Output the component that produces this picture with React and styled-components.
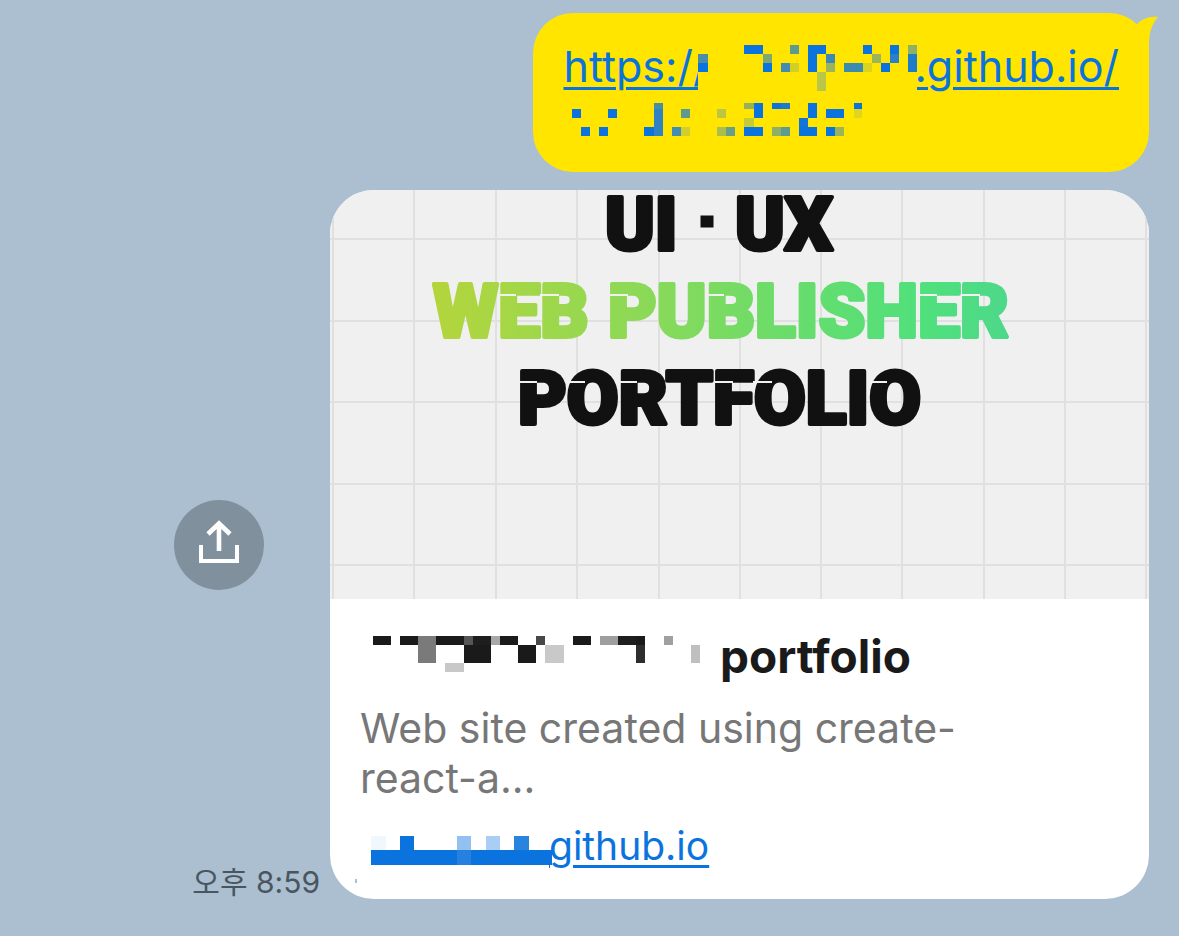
import React from "react";
import styled, { createGlobalStyle } from "styled-components";

const BLUE = "#0b73de";
const INK = "#1a1a1a";
const YELLOW = "#ffe500";

const GlobalStyle = createGlobalStyle`
  * { box-sizing: border-box; }
  body {
    margin: 0;
    background: #abbfd0;
    font-family: Inter, "Noto Sans CJK KR", sans-serif;
  }
`;

const Chat = styled.main`
  display: flex;
  flex-direction: column;
  align-items: flex-end;
  gap: 18px;
  min-height: 100vh;
  padding: 13px 30px 37px;
`;

const Bubble = styled.div`
  position: relative;
  padding: 26px 30px 35px;
  border-radius: 40px;
  background: ${YELLOW};
`;

const Tail = styled.svg`
  position: absolute;
  top: 3px;
  right: -9px;
  width: 30px;
  height: 44px;
`;

const MessageLink = styled.a`
  display: flex;
  flex-direction: column;
  gap: 10px;
  color: ${BLUE};
  font-size: 43px;
  line-height: 54px;
  text-decoration: none;
`;

const LinkLine = styled.span`
  display: flex;
  align-items: flex-start;
`;

const LinkText = styled.span`
  width: ${(p) => p.$width || "auto"};
  margin-left: ${(p) => (p.$tucked ? "-3px" : 0)};
  overflow: ${(p) => (p.$width ? "hidden" : "visible")};
  white-space: nowrap;
  text-decoration: underline;
  text-decoration-thickness: 3px;
  text-underline-offset: 5px;
`;

const MosaicArt = styled.svg`
  position: relative;
  display: block;
  flex: none;
  margin-top: ${(p) => p.$top || 0}px;
  margin-left: ${(p) => p.$left || 0}px;
  background: ${(p) => p.$ground || "transparent"};
`;

const PreviewRow = styled.div`
  display: flex;
  justify-content: flex-end;
  gap: 10px;
  width: 100%;
`;

const Meta = styled.div`
  display: grid;
  grid-template-rows: 1fr auto 1fr;
  flex: none;
  width: 146px;
`;

const ShareButton = styled.button`
  grid-row: 2;
  display: flex;
  align-items: center;
  justify-content: center;
  width: 90px;
  height: 90px;
  padding: 0 0 6px;
  border: 0;
  border-radius: 50%;
  background: #80909d;
  cursor: pointer;
`;

const Time = styled.time`
  grid-row: 3;
  align-self: end;
  justify-self: end;
  color: #4a565f;
  font-size: 30px;
  line-height: 34px;
  white-space: nowrap;
`;

const Card = styled.article`
  position: relative;
  flex: 0 1 819px;
  min-width: 0;
  overflow: hidden;
  border-radius: 44px;
  background: #fff;

  &::after {
    content: "";
    position: absolute;
    bottom: 16px;
    left: 25px;
    width: 2px;
    height: 4px;
    background: #abbfd0;
  }
`;

const Cover = styled.svg`
  display: block;
  width: 100%;
  height: auto;
`;

const CoverWord = styled.text`
  font-family: Roboto, sans-serif;
  font-size: 75px;
  font-weight: 900;
  stroke-width: 4px;
  stroke-linejoin: round;
`;

const Body = styled.div`
  display: flex;
  flex-direction: column;
  gap: 20px;
  padding: 30px;
`;

const Title = styled.h2`
  display: flex;
  align-items: flex-start;
  gap: 20px;
  margin: 0;
  color: ${INK};
  font-size: 46px;
  font-weight: 700;
  line-height: 54px;
`;

const Description = styled.p`
  max-width: 640px;
  margin: 0;
  color: #777;
  font-size: 41px;
  line-height: 50px;
`;

const HostLink = styled.a`
  display: flex;
  align-items: flex-start;
  color: ${BLUE};
  font-size: 39px;
  line-height: 46px;
  text-decoration: none;
`;

/* Cells are [x, y, width, height, colour]. */
const REPO_HOST = [
  [0, 9, 10, 9, "#4b8da8"], [0, 18, 10, 9, BLUE], [46, 0, 19, 9, BLUE],
  [65, 9, 9, 9, "#7fa76f"], [65, 18, 9, 9, BLUE], [83, 18, 9, 9, "#438caf"],
  [92, 18, 9, 9, "#d3cf28"], [92, 0, 9, 9, "#5d9a90"], [110, 0, 9, 27, BLUE],
  [119, 0, 9, 9, BLUE], [128, 9, 9, 9, "#3d88b5"], [128, 18, 9, 9, "#98b45c"],
  [119, 27, 9, 19, "#bac646"], [146, 18, 19, 9, "#3a8bb0"], [165, 18, 9, 9, "#dbd41f"],
  [165, 0, 9, 9, BLUE], [174, 9, 9, 9, "#9bb558"], [183, 18, 9, 9, BLUE],
  [192, 0, 9, 9, BLUE], [192, 9, 9, 9, "#2880c8"], [210, 0, 9, 9, "#8eb068"],
  [210, 9, 9, 18, "#1f7ccb"],
];

const REPO_PATH = [
  [9, 6, 9, 9, BLUE], [18, 24, 9, 9, BLUE], [36, 24, 9, 9, BLUE], [45, 6, 9, 9, BLUE],
  [81, 24, 10, 9, BLUE], [91, 0, 9, 6, "#4690a5"], [91, 6, 9, 27, "#2f83c0"],
  [109, 24, 9, 9, "#428db0"], [118, 24, 9, 9, "#d2cf2a"], [118, 6, 9, 9, "#5e9a91"],
  [154, 6, 9, 9, "#bbc740"], [154, 24, 9, 9, "#aabd4e"], [163, 24, 9, 9, "#68a086"],
  [181, 0, 10, 6, "#94b160"], [191, 0, 9, 15, BLUE], [181, 15, 10, 9, "#c5cb35"],
  [181, 24, 19, 9, BLUE], [209, 0, 9, 6, BLUE], [218, 0, 9, 6, "#1b7acd"],
  [209, 24, 9, 9, "#8cb06a"], [218, 24, 9, 9, "#609b90"], [236, 15, 9, 9, "#1273d8"],
  [236, 24, 18, 9, BLUE], [245, 0, 9, 15, BLUE], [263, 6, 18, 9, BLUE],
  [263, 24, 9, 9, BLUE], [272, 24, 9, 9, "#9ab45a"], [291, 0, 8, 6, BLUE],
  [291, 6, 8, 9, "#dfd71b"],
];

const OWNER_NAME = [
  [0, 0, 18, 9, INK], [27, 0, 18, 9, INK], [45, 0, 18, 27, "#7a7a7a"], [63, 0, 28, 9, INK],
  [91, 0, 9, 9, "#555"], [100, 0, 18, 9, "#1e1e1e"], [118, 0, 9, 9, "#a8a8a8"],
  [127, 0, 18, 9, INK], [163, 0, 9, 9, "#484848"], [200, 0, 18, 9, INK],
  [227, 0, 18, 9, "#9e9e9e"], [245, 0, 18, 9, "#1e1e1e"], [263, 0, 9, 9, INK],
  [291, 0, 9, 9, "#a0a0a0"], [91, 9, 27, 18, INK], [145, 9, 18, 18, INK],
  [172, 9, 19, 18, "#c9c9c9"], [263, 9, 9, 18, "#2e2e2e"], [318, 9, 9, 18, "#bfbfbf"],
  [72, 27, 19, 9, "#c8c8c8"],
];

const OWNER_HOST = [
  [0, 14, 181, 15, BLUE], [86, 14, 14, 15, "#2680e0"], [0, 0, 15, 14, "#f1f8fd"],
  [29, 0, 14, 14, BLUE], [86, 0, 14, 14, "#92c0f1"], [115, 0, 14, 14, "#a9cdf4"],
  [143, 0, 15, 14, "#2984de"],
];

function Mosaic({ cells, width, height, top, left, ground }) {
  return (
    <MosaicArt
      width={width}
      height={height}
      viewBox={`0 0 ${width} ${height}`}
      shapeRendering="crispEdges"
      aria-hidden="true"
      $top={top}
      $left={left}
      $ground={ground}
    >
      {cells.map(([x, y, w, h, fill], i) => (
        <rect key={i} x={x} y={y} width={w} height={h} fill={fill} />
      ))}
    </MosaicArt>
  );
}

const GRID_X = [3, 84, 166, 247, 329, 410, 491, 572, 654, 735, 816];
const GRID_Y = [49, 131, 212, 294, 375];

/* Stencil cuts across the left stems of the cover lettering. */
const CUTS_LIME = [168, 211, 280, 376, 589, 632];
const CUTS_BLACK = [189, 237, 289, 385, 424, 539];

function PortfolioCover() {
  return (
    <Cover viewBox="0 0 819 409" role="img" aria-label="UI · UX Web Publisher Portfolio">
      <defs>
        <linearGradient id="lime" gradientUnits="userSpaceOnUse" x1="102" y1="0" x2="680" y2="0">
          <stop offset="0" stopColor="#b4d53c" />
          <stop offset="0.35" stopColor="#8dd956" />
          <stop offset="0.65" stopColor="#65dd6e" />
          <stop offset="0.85" stopColor="#50e07c" />
          <stop offset="1" stopColor="#4dd88a" />
        </linearGradient>
      </defs>
      <rect width="819" height="409" fill="#f0f0f0" />
      <g stroke="#e0e0e0" strokeWidth="2">
        {GRID_X.map((x) => <path key={x} d={`M${x} 0V409`} />)}
        {GRID_Y.map((y) => <path key={y} d={`M0 ${y}H819`} />)}
      </g>
      <g fill="#111" stroke="#111">
        <CoverWord x="275" y="60">UI</CoverWord>
        <rect x="371" y="26" width="12" height="11" />
        <CoverWord x="405" y="60">UX</CoverWord>
        <CoverWord x="188" y="234">PORTFOLIO</CoverWord>
      </g>
      <g fill="url(#lime)" stroke="url(#lime)">
        <CoverWord x="103" y="147">WEB</CoverWord>
        <CoverWord x="278" y="147">PUBLISHER</CoverWord>
      </g>
      <g stroke="#f0f0f0" strokeWidth="2">
        {CUTS_LIME.map((x) => <path key={x} d={`M${x - 1} 105h19`} />)}
        {CUTS_BLACK.map((x) => <path key={x} d={`M${x - 1} 192h19`} />)}
      </g>
    </Cover>
  );
}

export default function App() {
  return (
    <>
      <GlobalStyle />
      <Chat>
        <Bubble>
          <Tail viewBox="0 0 30 44" aria-hidden="true">
            <path d="M0 16L9 8C14 3 21 0 30 1C23 9 21 18 21 29V44L0 36Z" fill={YELLOW} />
          </Tail>
          <MessageLink href="#repository">
            <LinkLine>
              <LinkText $width="135px">https://</LinkText>
              <Mosaic cells={REPO_HOST} width={219} height={46} top={6} ground={YELLOW} />
              <LinkText $tucked>.github.io/</LinkText>
            </LinkLine>
            <Mosaic cells={REPO_PATH} width={299} height={34} />
          </MessageLink>
        </Bubble>

        <PreviewRow>
          <Meta>
            <ShareButton type="button" aria-label="공유">
              <svg width="40" height="43" viewBox="0 0 40 43" fill="none" stroke="#fff" aria-hidden="true">
                <path d="M2 25V41H38V25" strokeWidth="4" />
                <path d="M20 4V31M9 14L20 3.5L31 14" strokeWidth="4.6" />
              </svg>
            </ShareButton>
            <Time dateTime="20:59">오후 8:59</Time>
          </Meta>
          <Card>
            <PortfolioCover />
            <Body>
              <Title>
                <Mosaic cells={OWNER_NAME} width={327} height={36} top={7} left={13} />
                portfolio
              </Title>
              <Description>Web site created using create-react-a...</Description>
              <HostLink href="#site">
                <Mosaic cells={OWNER_HOST} width={181} height={29} top={13} left={11} />
                <LinkText $tucked>github.io</LinkText>
              </HostLink>
            </Body>
          </Card>
        </PreviewRow>
      </Chat>
    </>
  );
}
